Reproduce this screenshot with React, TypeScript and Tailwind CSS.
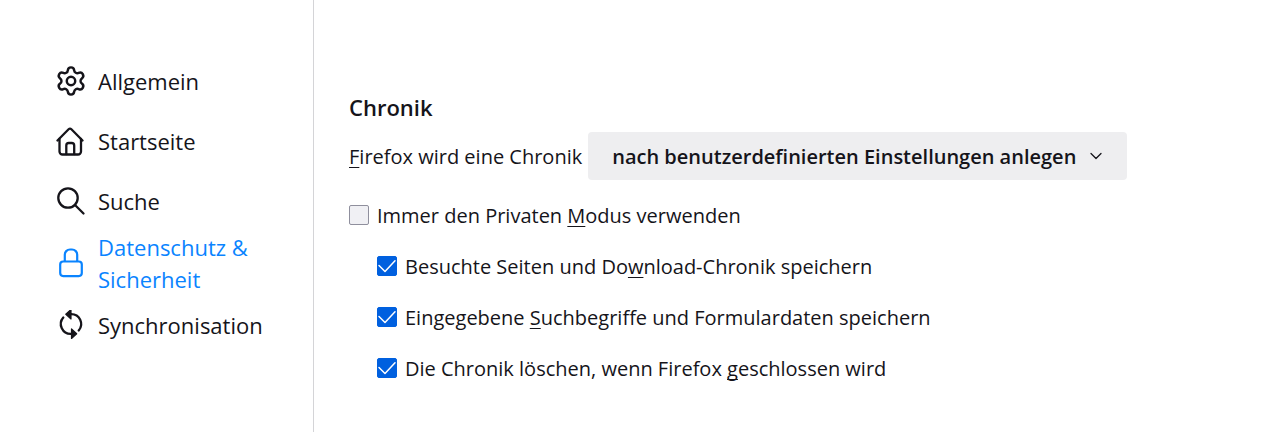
import React, { useState } from "react";

interface NavItem {
  id: string;
  label: string;
  icon: React.ReactNode;
}

interface HistoryOption {
  id: string;
  before: string;
  accessKey: string;
  after: string;
}

const GearIcon = () => (
  <svg viewBox="1 1 22 22" className="size-[30px]" fill="none" stroke="currentColor" strokeWidth="1.8" strokeLinecap="round" strokeLinejoin="round">
    <path d="M9.671 4.136a2.34 2.34 0 0 1 4.659 0 2.34 2.34 0 0 0 3.319 1.915 2.34 2.34 0 0 1 2.33 4.033 2.34 2.34 0 0 0 0 3.831 2.34 2.34 0 0 1-2.33 4.033 2.34 2.34 0 0 0-3.319 1.915 2.34 2.34 0 0 1-4.659 0 2.34 2.34 0 0 0-3.32-1.915 2.34 2.34 0 0 1-2.33-4.033 2.34 2.34 0 0 0 0-3.831A2.34 2.34 0 0 1 6.35 6.051a2.34 2.34 0 0 0 3.319-1.915" />
    <circle cx="12" cy="12" r="3.1" />
  </svg>
);

const HomeIcon = () => (
  <svg viewBox="0 0 30 30" className="size-[30px]" fill="none" stroke="currentColor" strokeWidth="2.3" strokeLinecap="round" strokeLinejoin="round">
    <path d="M1.5 14.5 12.6 3.3a2 2 0 0 1 2.8 0L26.5 14.5" />
    <path d="M3.5 13v12.5a3 3 0 0 0 3 3h15.5a3 3 0 0 0 3-3V13" />
    <path d="M10.3 28v-8.500A2.500 2.500 0 0 1 12.800 17h2.900a2.500 2.500 0 0 1 2.500 2.500V28" />
  </svg>
);

const SearchIcon = () => (
  <svg viewBox="0 0 30 30" className="size-[30px]" fill="none" stroke="currentColor" strokeWidth="2.3" strokeLinecap="round">
    <circle cx="12" cy="12" r="9.7" />
    <path d="m19 19 8.5 8.5" />
  </svg>
);

const LockIcon = () => (
  <svg viewBox="0 0 30 30" className="size-[30px]" fill="none" stroke="currentColor" strokeWidth="2.2" strokeLinejoin="round">
    <rect x="4.2" y="13.5" width="21.6" height="14.6" rx="3" />
    <path d="M8.8 13.5V7a5.2 5.2 0 0 1 5.2-5.500h2A5.200 5.200 0 0 1 21.200 7v6.500" />
  </svg>
);

const SyncIcon = () => (
  <svg viewBox="0 0 30 30" className="size-[30px]" fill="none" stroke="currentColor" strokeWidth="2.3" strokeLinecap="round">
    <path d="M15 4.100A9.900 9.900 0 0 1 22.700 20.500" />
    <path d="M15 23.900A9.900 9.900 0 0 1 7.300 7.500" />
    <path d="M15-.5v9.500L9.800 4.200z" fill="currentColor" strokeWidth="1.200" strokeLinejoin="round" />
    <path d="M15.500 19v9.500l5.200-4.700z" fill="currentColor" strokeWidth="1.200" strokeLinejoin="round" />
  </svg>
);

const navItems: NavItem[] = [
  { id: "general", label: "Allgemein", icon: <GearIcon /> },
  { id: "home", label: "Startseite", icon: <HomeIcon /> },
  { id: "search", label: "Suche", icon: <SearchIcon /> },
  { id: "privacy", label: "Datenschutz & Sicherheit", icon: <LockIcon /> },
  { id: "sync", label: "Synchronisation", icon: <SyncIcon /> },
];

const historyOptions: HistoryOption[] = [
  { id: "remember", before: "Besuchte Seiten und Do", accessKey: "w", after: "nload-Chronik speichern" },
  { id: "forms", before: "Eingegebene ", accessKey: "S", after: "uchbegriffe und Formulardaten speichern" },
  { id: "clear", before: "Die Chronik löschen, wenn Firefox ", accessKey: "g", after: "eschlossen wird" },
];

function AccessKey({ children }: { children: React.ReactNode }) {
  return <span className="underline decoration-1 underline-offset-3 [text-decoration-skip-ink:none]">{children}</span>;
}

function CheckRow({
  option,
  checked,
  onChange,
}: {
  option: HistoryOption;
  checked: boolean;
  onChange: (checked: boolean) => void;
}) {
  return (
    <div className="flex items-center gap-2">
      <span className="relative size-5 shrink-0">
        <input
          id={option.id}
          type="checkbox"
          checked={checked}
          onChange={(e) => onChange(e.target.checked)}
          className="peer block size-5 appearance-none rounded-xs border border-[#8f8f9d] bg-[#f0f0f4] checked:border-[#0060df] checked:bg-[#0060df]"
        />
        <svg
          viewBox="0 0 20 20"
          className="pointer-events-none absolute inset-0 hidden size-5 peer-checked:block"
          fill="none"
          stroke="white"
          strokeWidth="1.5"
          strokeLinecap="round"
          strokeLinejoin="round"
        >
          <path d="m2 9.5 6 6L18 4.8" />
        </svg>
      </span>
      <label htmlFor={option.id} className="pt-0.5 leading-[26px]">
        {option.before}
        <AccessKey>{option.accessKey}</AccessKey>
        {option.after}
      </label>
    </div>
  );
}

export default function App() {
  const [active, setActive] = useState("privacy");
  const [mode, setMode] = useState("custom");
  const [checked, setChecked] = useState<Record<string, boolean>>({
    private: false,
    remember: true,
    forms: true,
    clear: true,
  });

  const toggle = (id: string) => (value: boolean) => setChecked({ ...checked, [id]: value });

  return (
    <div className="flex min-h-screen bg-white font-['Open_Sans',sans-serif] text-[20px] text-[#15141a]">
      <nav className="w-[314px] shrink-0 border-r border-[#d4d4d7] pt-[51px] pr-8 pl-14 text-[22px] leading-8">
        {navItems.map((item) => (
          <a
            key={item.id}
            href={`#${item.id}`}
            onClick={() => setActive(item.id)}
            className={`flex min-h-[60px] items-center gap-3 ${active === item.id ? "text-[#0a84ff]" : ""}`}
          >
            <span className="shrink-0">{item.icon}</span>
            {item.label}
          </a>
        ))}
      </nav>

      <main className="min-w-0 flex-1 px-[35px] pt-[91px]">
        <h2 className="text-[22px] leading-8 font-semibold">Chronik</h2>

        <div className="mt-[9px] flex items-center gap-1.5">
          <label htmlFor="historyMode" className="pt-0.5 whitespace-nowrap">
            <AccessKey>F</AccessKey>irefox wird eine Chronik
          </label>
          <div className="relative">
            <select
              id="historyMode"
              value={mode}
              onChange={(e) => setMode(e.target.value)}
              className="h-12 appearance-none rounded bg-[#eeeef0] pt-0.5 pr-[50px] pl-6 font-semibold"
            >
              <option value="custom">nach benutzerdefinierten Einstellungen anlegen</option>
              <option value="remember">anlegen</option>
              <option value="never">niemals anlegen</option>
            </select>
            <svg
              viewBox="0 0 12 12"
              className="pointer-events-none absolute top-[18px] right-[25px] size-3"
              fill="none"
              stroke="currentColor"
              strokeWidth="1.3"
              strokeLinecap="round"
              strokeLinejoin="round"
            >
              <path d="m1 3.5 5 5 5-5" />
            </svg>
          </div>
        </div>

        <div className="mt-[21px] flex flex-col gap-[23px]">
          <CheckRow
            option={{ id: "private", before: "Immer den Privaten ", accessKey: "M", after: "odus verwenden" }}
            checked={checked.private}
            onChange={toggle("private")}
          />
          <div className="flex flex-col gap-[23px] pl-7">
            {historyOptions.map((option) => (
              <CheckRow key={option.id} option={option} checked={checked[option.id]} onChange={toggle(option.id)} />
            ))}
          </div>
        </div>
      </main>
    </div>
  );
}
